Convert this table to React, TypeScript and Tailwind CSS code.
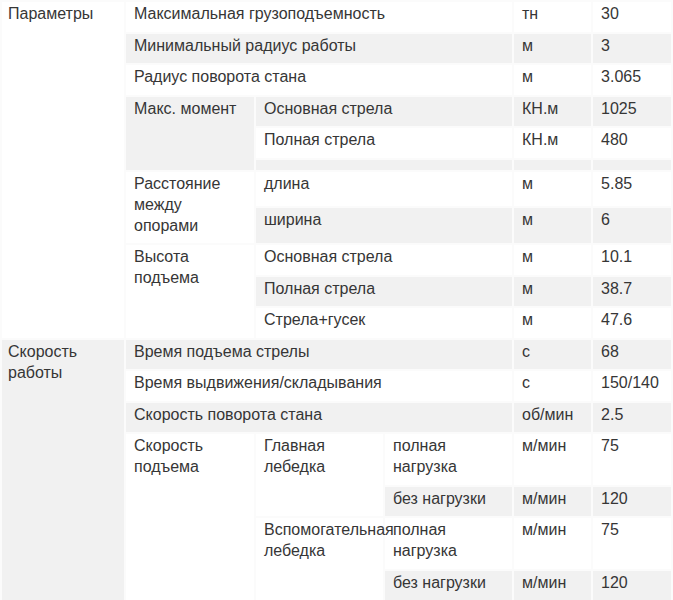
import React, { FC } from "react";

const Td: FC<{ children?: React.ReactNode; colSpan?: number; rowSpan?: number; first?: boolean }> = ({
  children,
  colSpan,
  rowSpan,
  first,
}) => (
  <td
    colSpan={colSpan}
    rowSpan={rowSpan}
    className={`border-2 border-[#fbfbfb] ${first ? "pl-[6px]" : "pl-[8px]"} pr-[8px] pt-[1px] pb-[7.5px] align-top leading-[21px]`}
  >
    {children}
  </td>
);

const rowCls = (i: number) => (i % 2 === 0 ? "bg-[#f1f1f1]" : "bg-white");

export default function App() {
  return (
    <div className="bg-white w-[673px] h-[600px] overflow-hidden">
      <table
        className="table-fixed border-collapse w-[671px] text-[16px] text-[#363636]"
        style={{ fontFamily: '"Liberation Sans", Arial, sans-serif' }}
      >
        <colgroup>
          <col className="w-[124px]" />
          <col className="w-[130px]" />
          <col className="w-[129px]" />
          <col className="w-[129px]" />
          <col className="w-[79px]" />
          <col className="w-[80px]" />
        </colgroup>
        <tbody>
          <tr className={rowCls(1)}>
            <Td rowSpan={11} first>Параметры</Td>
            <Td colSpan={3}>Максимальная грузоподъемность</Td>
            <Td>тн</Td>
            <Td>30</Td>
          </tr>
          <tr className={rowCls(2)}>
            <Td colSpan={3}>Минимальный радиус работы</Td>
            <Td>м</Td>
            <Td>3</Td>
          </tr>
          <tr className={rowCls(3)}>
            <Td colSpan={3}>Радиус поворота стана</Td>
            <Td>м</Td>
            <Td>3.065</Td>
          </tr>
          <tr className={rowCls(4)}>
            <Td rowSpan={3}>Макс. момент</Td>
            <Td colSpan={2}>Основная стрела</Td>
            <Td>КН.м</Td>
            <Td>1025</Td>
          </tr>
          <tr className={rowCls(5)}>
            <Td colSpan={2}>Полная стрела</Td>
            <Td>КН.м</Td>
            <Td>480</Td>
          </tr>
          <tr className={`${rowCls(6)} h-[12px]`}>
            <td colSpan={2} className="border-2 border-[#fbfbfb] p-0 h-[12px]"></td>
            <td className="border-2 border-[#fbfbfb] p-0"></td>
            <td className="border-2 border-[#fbfbfb] p-0"></td>
          </tr>
          <tr className={rowCls(7)}>
            <Td rowSpan={2}>Расстояние между опорами</Td>
            <Td colSpan={2}>длина</Td>
            <Td>м</Td>
            <Td>5.85</Td>
          </tr>
          <tr className={rowCls(8)}>
            <Td colSpan={2}>ширина</Td>
            <Td>м</Td>
            <Td>6</Td>
          </tr>
          <tr className={rowCls(9)}>
            <Td rowSpan={3}>Высота подъема</Td>
            <Td colSpan={2}>Основная стрела</Td>
            <Td>м</Td>
            <Td>10.1</Td>
          </tr>
          <tr className={rowCls(10)}>
            <Td colSpan={2}>Полная стрела</Td>
            <Td>м</Td>
            <Td>38.7</Td>
          </tr>
          <tr className={rowCls(11)}>
            <Td colSpan={2}>Стрела+гусек</Td>
            <Td>м</Td>
            <Td>47.6</Td>
          </tr>
          <tr className={rowCls(12)}>
            <Td rowSpan={7} first>Скорость работы</Td>
            <Td colSpan={3}>Время подъема стрелы</Td>
            <Td>с</Td>
            <Td>68</Td>
          </tr>
          <tr className={rowCls(13)}>
            <Td colSpan={3}>Время выдвижения/складывания</Td>
            <Td>с</Td>
            <Td>150/140</Td>
          </tr>
          <tr className={rowCls(14)}>
            <Td colSpan={3}>Скорость поворота стана</Td>
            <Td>об/мин</Td>
            <Td>2.5</Td>
          </tr>
          <tr className={rowCls(15)}>
            <Td rowSpan={4}>Скорость подъема</Td>
            <Td rowSpan={2}>Главная лебедка</Td>
            <Td>полная нагрузка</Td>
            <Td>м/мин</Td>
            <Td>75</Td>
          </tr>
          <tr className={rowCls(16)}>
            <Td>без нагрузки</Td>
            <Td>м/мин</Td>
            <Td>120</Td>
          </tr>
          <tr className={rowCls(17)}>
            <Td rowSpan={2}>
              <span className="whitespace-nowrap">Вспомогательная</span> лебедка
            </Td>
            <Td>полная нагрузка</Td>
            <Td>м/мин</Td>
            <Td>75</Td>
          </tr>
          <tr className={rowCls(18)}>
            <Td>без нагрузки</Td>
            <Td>м/мин</Td>
            <Td>120</Td>
          </tr>
        </tbody>
      </table>
    </div>
  );
}
